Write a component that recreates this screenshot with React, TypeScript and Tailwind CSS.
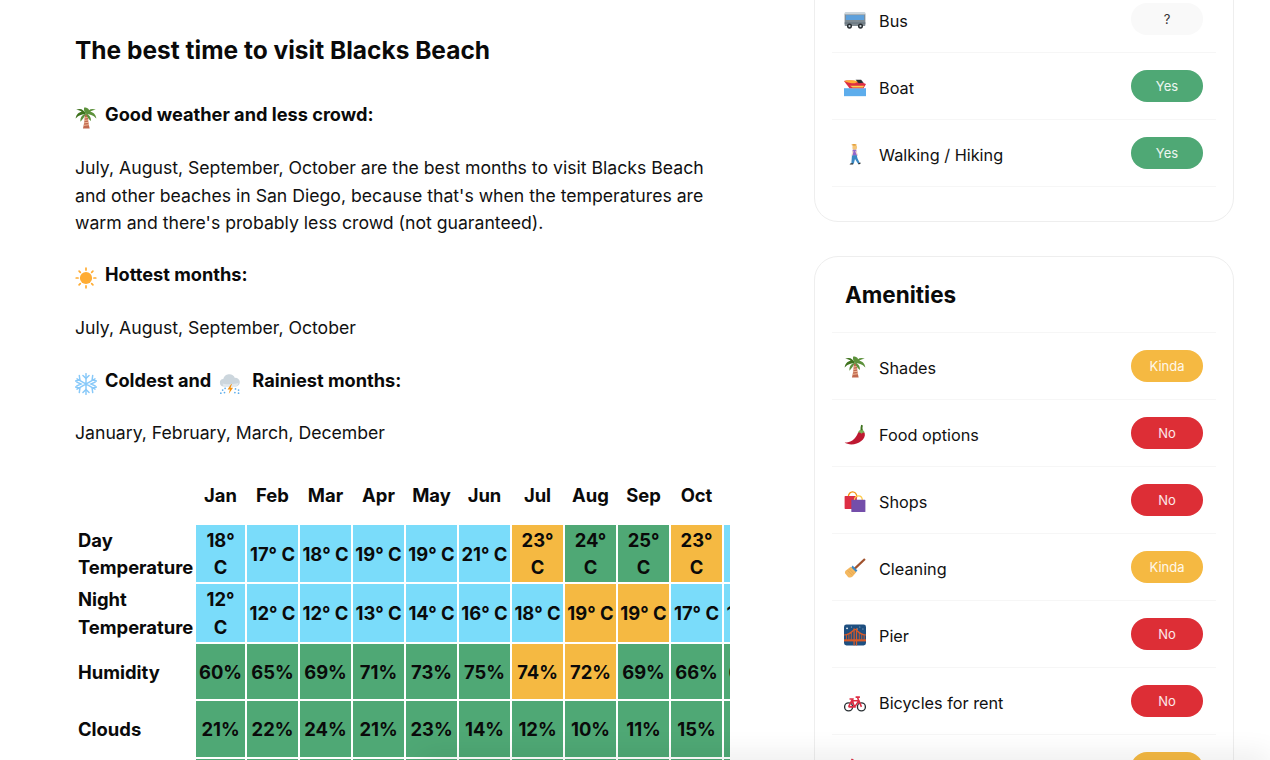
import React from "react";

function E({ children, className = "" }: { children: React.ReactNode; className?: string }) {
  return (
    <svg viewBox="0 0 36 36" className={"w-[22px] h-[22px] shrink-0 " + className}>
      {children}
    </svg>
  );
}

const Palm = ({ className = "" }: { className?: string }) => (
  <E className={className}>
    <path d="M16 12h5c0 8 1 15 3 23H13c2-7 3-15 3-23z" fill="#C1694F" />
    <path d="M15.5 18l6-1M15 22l7-1M14.5 26l8-1M14 30l9-1" stroke="#F4C2A0" strokeWidth="1.5" />
    <path d="M18 12C15 4 8 1 2 5c4 0 7 1 9 3-5 0-9 4-10 11 4-4 8-7 17-7z" fill="#3E721D" />
    <path d="M18 12c3-8 10-11 16-7-4 0-7 1-9 3 5 0 9 4 10 11-4-4-8-7-17-7z" fill="#5C913B" />
    <path d="M18 12c-3-4-4-8-3-11 3 0 7 1 8 4 0 3-2 5-5 7zM18 11c-5 1-10 5-9 13 4-4 6-8 9-13zM18 11c4 1 9 5 8 12-4-3-6-7-8-12z" fill="#5C913B" />
  </E>
);
const Sun = ({ className = "" }: { className?: string }) => (
  <E className={className}>
    <circle cx="18" cy="18" r="10" fill="#FFAC33" />
    <g stroke="#FFAC33" strokeWidth="2.8" strokeLinecap="round">
      <path d="M18 2v3M18 31v3M2 18h3M31 18h3M6.7 6.7l2 2M27.3 27.3l2 2M6.7 29.3l2-2M27.3 8.7l2-2" />
    </g>
  </E>
);
const Snow = ({ className = "" }: { className?: string }) => (
  <E className={className}>
    <g stroke="#88C9F9" strokeWidth="2.4" strokeLinecap="round" fill="none">
      <path d="M18 1v34M3.3 9.5l29.4 17M3.3 26.5l29.4-17" />
      <path d="M13 4l5 5 5-5M13 32l5-5 5 5M3 15l7 3-7 3M33 15l-7 3 7 3M7 4l1 7-7 2M29 4l-1 7 7 2M7 32l1-7-7-2M29 32l-1-7 7-2" />
    </g>
  </E>
);
const Storm = ({ className = "" }: { className?: string }) => (
  <E className={className}>
    <path d="M8 22a6 6 0 0 1-1-12 10 10 0 0 1 19-2 7 7 0 0 1 2 14z" fill="#CCD6DD" />
    <path d="M8 22a6 6 0 0 1-2-5c8 2 18 2 26-1a7 7 0 0 1-4 6z" fill="#E1E8ED" />
    <path d="M20 18l-6 9h4l-2 7 7-10h-4l2-6z" fill="#F4900C" />
    <g fill="#5DADEC">
      <circle cx="6" cy="28" r="1.4" /><circle cx="10" cy="25" r="1.4" /><circle cx="3" cy="33" r="1.4" /><circle cx="9" cy="32" r="1.4" />
      <circle cx="27" cy="26" r="1.4" /><circle cx="32" cy="28" r="1.4" /><circle cx="26" cy="32" r="1.4" /><circle cx="32" cy="33" r="1.4" />
    </g>
  </E>
);
const Bus = () => (
  <E>
    <path d="M1 9c0-2 1-3 3-3h28c2 0 3 1 3 3v17c0 1-1 2-2 2H3c-1 0-2-1-2-2z" fill="#808B92" />
    <rect x="1" y="5" width="34" height="4" rx="2" fill="#CCD6DD" />
    <rect x="3" y="10" width="30" height="8" fill="#5DA0DC" />
    <rect x="1" y="22" width="34" height="2" fill="#66757F" />
    <circle cx="9" cy="28" r="4.2" fill="#292F33" /><circle cx="9" cy="28" r="1.8" fill="#CCD6DD" />
    <circle cx="27" cy="28" r="4.2" fill="#292F33" /><circle cx="27" cy="28" r="1.8" fill="#CCD6DD" />
  </E>
);
const Boat = () => (
  <E>
    <rect x="0" y="20" width="36" height="13" fill="#5DADEC" />
    <path d="M0 8c10-2 26 0 36 5l-4 7H9z" fill="#DD2E44" />
    <path d="M0 8c8-2 18-1 24 1l-6 3C11 12 5 10 0 8z" fill="#FFAC33" />
    <path d="M19 6h9l4 5-8 1z" fill="#292F33" />
    <path d="M10 16l23 0-2 3H14z" fill="#FFCC4D" />
  </E>
);
const Walk = () => (
  <E>
    <path d="M14 5c0-3 6-4 7 0 1 3 0 5-1 6h-5c-2-2-1-4-1-6z" fill="#F4C67A" />
    <path d="M12 3c2-2 7-2 9 0-2 2-7 2-9 0z" fill="#E5A23D" />
    <path d="M14 11h6l2 10h-9z" fill="#9266CC" />
    <path d="M13 20h8l1 5 4 8-3 1-5-8-2 8h-4z" fill="#3B88C3" />
    <path d="M20 12l3 8-1.5 1-3-7zM14 12l-2 9h1.6l2-7z" fill="#F7DECE" />
    <path d="M11 33h4v2H9zM23 33l4-1v2l-3 1z" fill="#292F33" />
  </E>
);
const Chili = () => (
  <E>
    <path d="M1 32c10 0 18-5 22-16 1-3 10-3 11 1 2 9-10 18-22 18-4 0-9-1-11-3z" fill="#BE1931" />
    <path d="M23 16c1-6 9-7 11 0-3-1-4 0-5 2-1-2-4-3-6-2z" fill="#77B255" />
    <path d="M27 12c0-3 0-6 1-9l3 1c-1 3-1 5 0 8z" fill="#3E721D" />
  </E>
);
const Bags = () => (
  <E>
    <path d="M7 12C7 0 21 0 21 12" fill="none" stroke="#F4900C" strokeWidth="2.2" />
    <rect x="1" y="10" width="20" height="21" rx="1" fill="#DD2E44" />
    <path d="M17 17c0-10 13-10 13 0" fill="none" stroke="#FFCC4D" strokeWidth="2.2" />
    <rect x="12" y="16" width="23" height="20" rx="1" fill="#744EAA" />
  </E>
);
const Broom = () => (
  <E>
    <path d="M33 2l2.5 2.5-18 17-2.5-2.5z" fill="#A0522D" />
    <path d="M14 14l8 8-4 4-7-7z" fill="#3B88C3" />
    <path d="M11 16l9 9-6 7c-2 2-5 2-7 1L2 27c-1-2 0-4 1-5z" fill="#F4B860" />
    <path d="M6 22l8 8M9 20l8 8" stroke="#D99E4A" strokeWidth="1" />
  </E>
);
const Bridge = () => (
  <E>
    <rect x="0" y="1" width="36" height="34" rx="4" fill="#1E4F80" />
    <g fill="#fff"><circle cx="5" cy="7" r="1.4" /><circle cx="12" cy="5" r="0.8" /><circle cx="26" cy="5" r="0.8" /><circle cx="31" cy="8" r="0.8" /><circle cx="22" cy="8" r="0.8" /></g>
    <path d="M0 18C8 18 12 14 17 9h2c5 5 9 9 17 9" fill="none" stroke="#D85A27" strokeWidth="2" />
    <rect x="15.5" y="7" width="2" height="28" fill="#D85A27" /><rect x="19.5" y="7" width="2" height="28" fill="#D85A27" />
    <rect x="0" y="25" width="36" height="3.5" fill="#D85A27" />
    <path d="M4 18v8M8 17v9M12 14v12M25 14v12M29 17v9M33 18v8" stroke="#D85A27" strokeWidth="1.4" />
  </E>
);
const Bike = () => (
  <E>
    <circle cx="7.5" cy="26" r="6.5" fill="none" stroke="#292F33" strokeWidth="2.2" />
    <circle cx="28.5" cy="26" r="6.5" fill="none" stroke="#292F33" strokeWidth="2.2" />
    <path d="M7.5 26l5-10h12l4 10M12.5 16l5 10H7.5M24.5 16l-7 10M24 16l-2-6M19 10h7M9 13h7M13 13l4 13" fill="none" stroke="#DD2E44" strokeWidth="2.6" />
  </E>
);
const Scooter = () => (
  <E>
    <path d="M12 2l6 4" stroke="#DD2E44" strokeWidth="3" fill="none" />
  </E>
);

const font = { fontFamily: "Inter, sans-serif" };

type S = "yes" | "no" | "kinda" | "q";
function Pill({ s }: { s: S }) {
  if (s === "yes") return <span className="w-[72px] h-8 pt-px rounded-full flex items-center justify-center text-[13px] text-white/90 bg-[#4fa875]">Yes</span>;
  if (s === "no") return <span className="w-[72px] h-8 pt-px rounded-full flex items-center justify-center text-[13px] text-white/90 bg-[#dd2e36]">No</span>;
  if (s === "kinda") return <span className="w-[72px] h-8 pt-px rounded-full flex items-center justify-center text-[13px] text-white/90 bg-[#f5b942]">Kinda</span>;
  return <span className="w-[72px] h-8 pt-px rounded-full flex items-center justify-center text-[13px] text-[#333] bg-[#f9f9f9]">?</span>;
}

function Row({ icon, label, s }: { icon: React.ReactNode; label: string; s: S }) {
  return (
    <div className="h-[67px] border-b border-[#f6f6f6] flex items-center pl-3 pr-[13px]">
      <div className="pt-0.5 flex">{icon}</div>
      <span className="ml-[13px] text-[16.25px] text-[#111] flex-1 pt-1">{label}</span>
      <Pill s={s} />
    </div>
  );
}

function H({ children }: { children: React.ReactNode }) {
  return <div className="flex items-center h-[27px] text-[18.2px] font-bold text-[#0a0a0a]">{children}</div>;
}
function P({ children, className = "" }: { children: React.ReactNode; className?: string }) {
  return <p className={"text-[17.65px] leading-[27.5px] text-[#111] " + className}>{children}</p>;
}

const months = ["Jan", "Feb", "Mar", "Apr", "May", "Jun", "Jul", "Aug", "Sep", "Oct", "Nov"];
const B = "bg-[#7adcfa]";
const G = "bg-[#4fa875]";
const O = "bg-[#f5b942]";
type C = [string, string];
const rows: { label: string; h: string; cells: C[] }[] = [
  {
    label: "Day\nTemperature",
    h: "h-[57.5px]",
    cells: [["18°\nC", B], ["17° C", B], ["18° C", B], ["19° C", B], ["19° C", B], ["21° C", B], ["23°\nC", O], ["24°\nC", G], ["25°\nC", G], ["23°\nC", O], ["21°\nC", B]],
  },
  {
    label: "Night\nTemperature",
    h: "h-[57.5px]",
    cells: [["12°\nC", B], ["12° C", B], ["12° C", B], ["13° C", B], ["14° C", B], ["16° C", B], ["18° C", B], ["19° C", O], ["19° C", O], ["17° C", B], ["15° C", B]],
  },
  {
    label: "Humidity",
    h: "h-[55.5px]",
    cells: [["60%", G], ["65%", G], ["69%", G], ["71%", G], ["73%", G], ["75%", G], ["74%", O], ["72%", O], ["69%", G], ["66%", G], ["62%", G]],
  },
  {
    label: "Clouds",
    h: "h-[55.5px]",
    cells: [["21%", G], ["22%", G], ["24%", G], ["21%", G], ["23%", G], ["14%", G], ["12%", G], ["10%", G], ["11%", G], ["15%", G], ["18%", G]],
  },
];

export default function App() {
  return (
    <div className="relative h-[760px] w-[1270px] overflow-hidden bg-white flex pl-[75px] gap-[84px]" style={font}>
      <main className="w-[655px] shrink-0 pt-[30px]">
        <h1 className="h-10 flex items-center text-[24.5px] font-bold text-[#0a0a0a]">The best time to visit Blacks Beach</h1>
        <div className="mt-[31px]">
          <H><Palm className="mt-[6px]" /><span className="ml-2">Good weather and less crowd:</span></H>
        </div>
        <P className="mt-[26px]">
          July, August, September, October are the best months to visit Blacks Beach and other beaches in San Diego, because that's when the temperatures are warm and there's probably less crowd (not guaranteed).
        </P>
        <div className="mt-[25px]">
          <H><Sun className="mt-[6px]" /><span className="ml-2">Hottest months:</span></H>
        </div>
        <P className="mt-[25px]">July, August, September, October</P>
        <div className="mt-[26px]">
          <H>
            <Snow className="mt-[6px]" /><span className="ml-2">Coldest and</span><Storm className="mt-[6px] ml-2" /><span className="ml-[11px]">Rainiest months:</span>
          </H>
        </div>
        <P className="mt-[25px]">January, February, March, December</P>

        <div className="mt-[19px] w-[655px] overflow-hidden grid grid-cols-[119px_49px_repeat(10,51px)] gap-[2px] text-[18.4px] font-bold text-[#0a0a0a] leading-[27.5px]">
          <div className="h-[57px]" />
          {months.map((m) => (
            <div key={m} className="h-[57px] pt-1 flex items-center justify-center">{m}</div>
          ))}
          {rows.map((r) => (
            <React.Fragment key={r.label}>
              <div className={r.h + " pt-0.5 flex items-center pl-[3px] whitespace-pre-line"}>{r.label}</div>
              {r.cells.map((c, i) => (
                <div key={i} className={r.h + " " + c[1] + " pt-0.5 flex items-center justify-center text-center whitespace-pre-line"}>
                  {c[0]}
                </div>
              ))}
            </React.Fragment>
          ))}
          <div className="h-[20px]" />
          {months.map((m) => (
            <div key={m} className={"h-[20px] " + G} />
          ))}
        </div>
      </main>

      <aside className="w-[420px] shrink-0 -mt-[79px]">
        <section className="border border-[#eeeeee] rounded-[24px] pt-[64px] pb-[34px] px-[17px]">
          <Row icon={<Bus />} label="Bus" s="q" />
          <Row icon={<Boat />} label="Boat" s="yes" />
          <Row icon={<Walk />} label="Walking / Hiking" s="yes" />
        </section>
        <section className="mt-[34px] border border-[#eeeeee] rounded-[24px] pb-[35px] px-[17px]">
          <div className="h-[76px] border-b border-[#f6f6f6] flex items-center pl-[13px] pt-[1px]">
            <h2 className="text-[22.5px] font-bold text-[#0a0a0a]">Amenities</h2>
          </div>
          <Row icon={<Palm />} label="Shades" s="kinda" />
          <Row icon={<Chili />} label="Food options" s="no" />
          <Row icon={<Bags />} label="Shops" s="no" />
          <Row icon={<Broom />} label="Cleaning" s="kinda" />
          <Row icon={<Bridge />} label="Pier" s="no" />
          <Row icon={<Bike />} label="Bicycles for rent" s="no" />
          <Row icon={<Scooter />} label="" s="kinda" />
        </section>
      </aside>

      <div className="absolute left-[420px] right-0 -bottom-[12px] h-[12px] shadow-[0_0_30px_rgba(0,0,0,0.16)]" />
    </div>
  );
}
